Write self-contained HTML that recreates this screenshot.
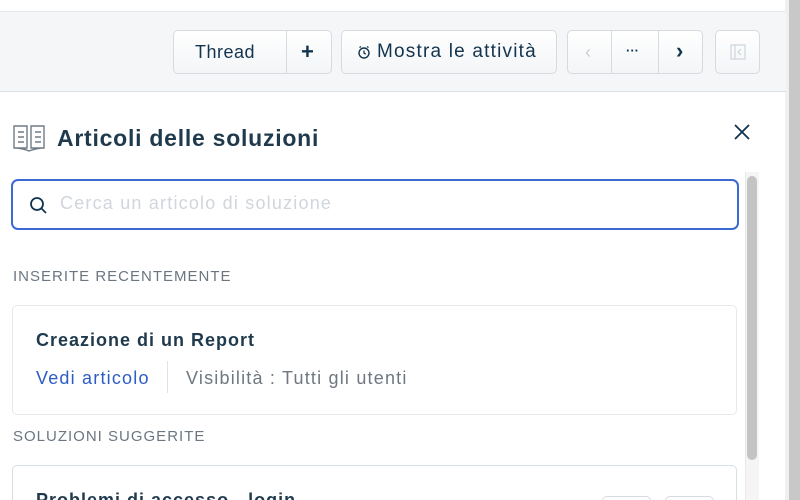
<!DOCTYPE html>
<html><head><meta charset="utf-8"><style>
*{box-sizing:border-box;margin:0;padding:0}
html,body{width:800px;height:500px;overflow:hidden}
body{background:#fff;font-family:"Liberation Sans",sans-serif;position:relative;color:#12344d}
.abs{position:absolute;white-space:nowrap}
.hdr{left:0;top:11px;width:786px;height:81px;background:#f4f6f8;border-top:1px solid #e6eaee;border-bottom:1px solid #d9e0e6}
.btn{position:absolute;top:30px;height:44px;border:1px solid #d5dbe1;border-radius:5px;background:linear-gradient(#fff,#f3f5f7);display:flex;align-items:center;font-size:18px;color:#12344d;white-space:nowrap}
.sep{position:absolute;top:0;bottom:0;width:1px;background:#d5dbe1}
.rbar{left:789px;top:0;width:11px;height:500px;background:#c8c8c8}
.rline{left:785px;top:0;width:4px;height:500px;background:#f0f0f0}
.card{border:1px solid #e5e9ee;border-radius:5px;background:#fff}
.lbl{font-size:15px;color:#6b7680;letter-spacing:1px}
</style></head><body>
<div class="abs rline"></div>
<div class="abs rbar"></div>
<div class="abs hdr"></div>
<div class="btn" style="left:173px;width:159px"><span style="position:absolute;left:21px;letter-spacing:.5px">Thread</span><div class="sep" style="left:112px"></div><span style="position:absolute;left:127px;font-size:22px;font-weight:bold">+</span></div>
<div class="btn" style="left:341px;width:216px;padding-left:15px;letter-spacing:1.2px;font-size:19px">
<svg width="14" height="14" viewBox="0 0 14 14" style="margin-right:6px"><circle cx="7" cy="8" r="5" fill="none" stroke="#12344d" stroke-width="1.4"/><path d="M7 5.5V8l1.8 1.2M2.5 2.5l1.5-1M11.5 2.5l-1.5-1" stroke="#12344d" stroke-width="1.3" fill="none"/></svg>Mostra le attività</div>
<div class="btn" style="left:567px;width:136px"><div class="sep" style="left:43px"></div><div class="sep" style="left:90px"></div>
<span style="position:absolute;left:17px;color:#c9d0d6;font-size:18px">‹</span>
<span style="position:absolute;left:58px;font-size:13px;top:12px;font-weight:bold">···</span>
<span style="position:absolute;left:108px;font-size:22px;font-weight:bold;top:7px">›</span></div>
<div class="btn" style="left:715px;width:45px;justify-content:center"><svg width="16" height="16" viewBox="0 0 16 16"><rect x="1" y="1" width="14" height="14" fill="none" stroke="#cdd4da" stroke-width="1.2"/><path d="M5 1v14M11 5l-3 3 3 3" stroke="#cdd4da" stroke-width="1.2" fill="none"/></svg></div>

<svg class="abs" style="left:12px;top:123px" width="35" height="30" viewBox="0 0 35 30"><path d="M2 3h13v22H2zM19 3h13v22H19zM2 25q8 0 15 3q8-3 15-3" fill="none" stroke="#6f7c87" stroke-width="1.4"/><path d="M6 9h6M6 14h6M6 19h6M23 9h6M23 14h6M23 19h6" stroke="#6f7c87" stroke-width="1.6"/></svg>
<div class="abs" style="left:57px;top:125px;font-size:23px;font-weight:bold;color:#1f3a4d;letter-spacing:.75px">Articoli delle soluzioni</div>
<svg class="abs" style="left:733px;top:123px" width="18" height="18" viewBox="0 0 18 18"><path d="M2 2l14 14M16 2L2 16" stroke="#12344d" stroke-width="1.8"/></svg>

<div class="abs" style="left:11px;top:179px;width:728px;height:51px;border:2px solid #3b6ad4;border-radius:7px"></div>
<svg class="abs" style="left:29px;top:196px" width="19" height="19" viewBox="0 0 19 19"><circle cx="8" cy="8" r="6" fill="none" stroke="#12344d" stroke-width="1.8"/><path d="M12.5 12.5L17 17" stroke="#12344d" stroke-width="1.8"/></svg>
<div class="abs" style="left:60px;top:193px;font-size:18px;color:#d0d6dc;letter-spacing:1.2px">Cerca un articolo di soluzione</div>

<div class="abs" style="left:745px;top:172px;width:14px;height:330px;background:#f5f5f5;border-left:1px solid #e8e8e8"></div>
<div class="abs" style="left:747px;top:176px;width:10px;height:284px;background:#c4c4c4;border-radius:5px"></div>

<div class="abs lbl" style="left:13px;top:268px">INSERITE RECENTEMENTE</div>
<div class="abs card" style="left:12px;top:305px;width:725px;height:110px"></div>
<div class="abs" style="left:36px;top:330px;font-size:18px;font-weight:bold;color:#1f3a4d;letter-spacing:1px">Creazione di un Report</div>
<div class="abs" style="left:36px;top:368px;font-size:18px;color:#2c5cc5;letter-spacing:1.2px">Vedi articolo</div>
<div class="abs" style="left:167px;top:361px;width:1px;height:32px;background:#dfe3e7"></div>
<div class="abs" style="left:186px;top:368px;font-size:18px;color:#6f7780;letter-spacing:1.2px">Visibilità : Tutti gli utenti</div>

<div class="abs lbl" style="left:13px;top:428px">SOLUZIONI SUGGERITE</div>
<div class="abs card" style="left:12px;top:465px;width:725px;height:60px;border-color:#d6dee6"></div>
<div class="abs" style="left:36px;top:490px;font-size:18px;font-weight:bold;color:#1f3a4d;letter-spacing:1px">Problemi di accesso - login</div>
<div class="abs" style="left:602px;top:496px;width:49px;height:20px;border:1px solid #d5dbe1;border-radius:5px"></div>
<div class="abs" style="left:665px;top:496px;width:49px;height:20px;border:1px solid #d5dbe1;border-radius:5px"></div>
</body></html>
